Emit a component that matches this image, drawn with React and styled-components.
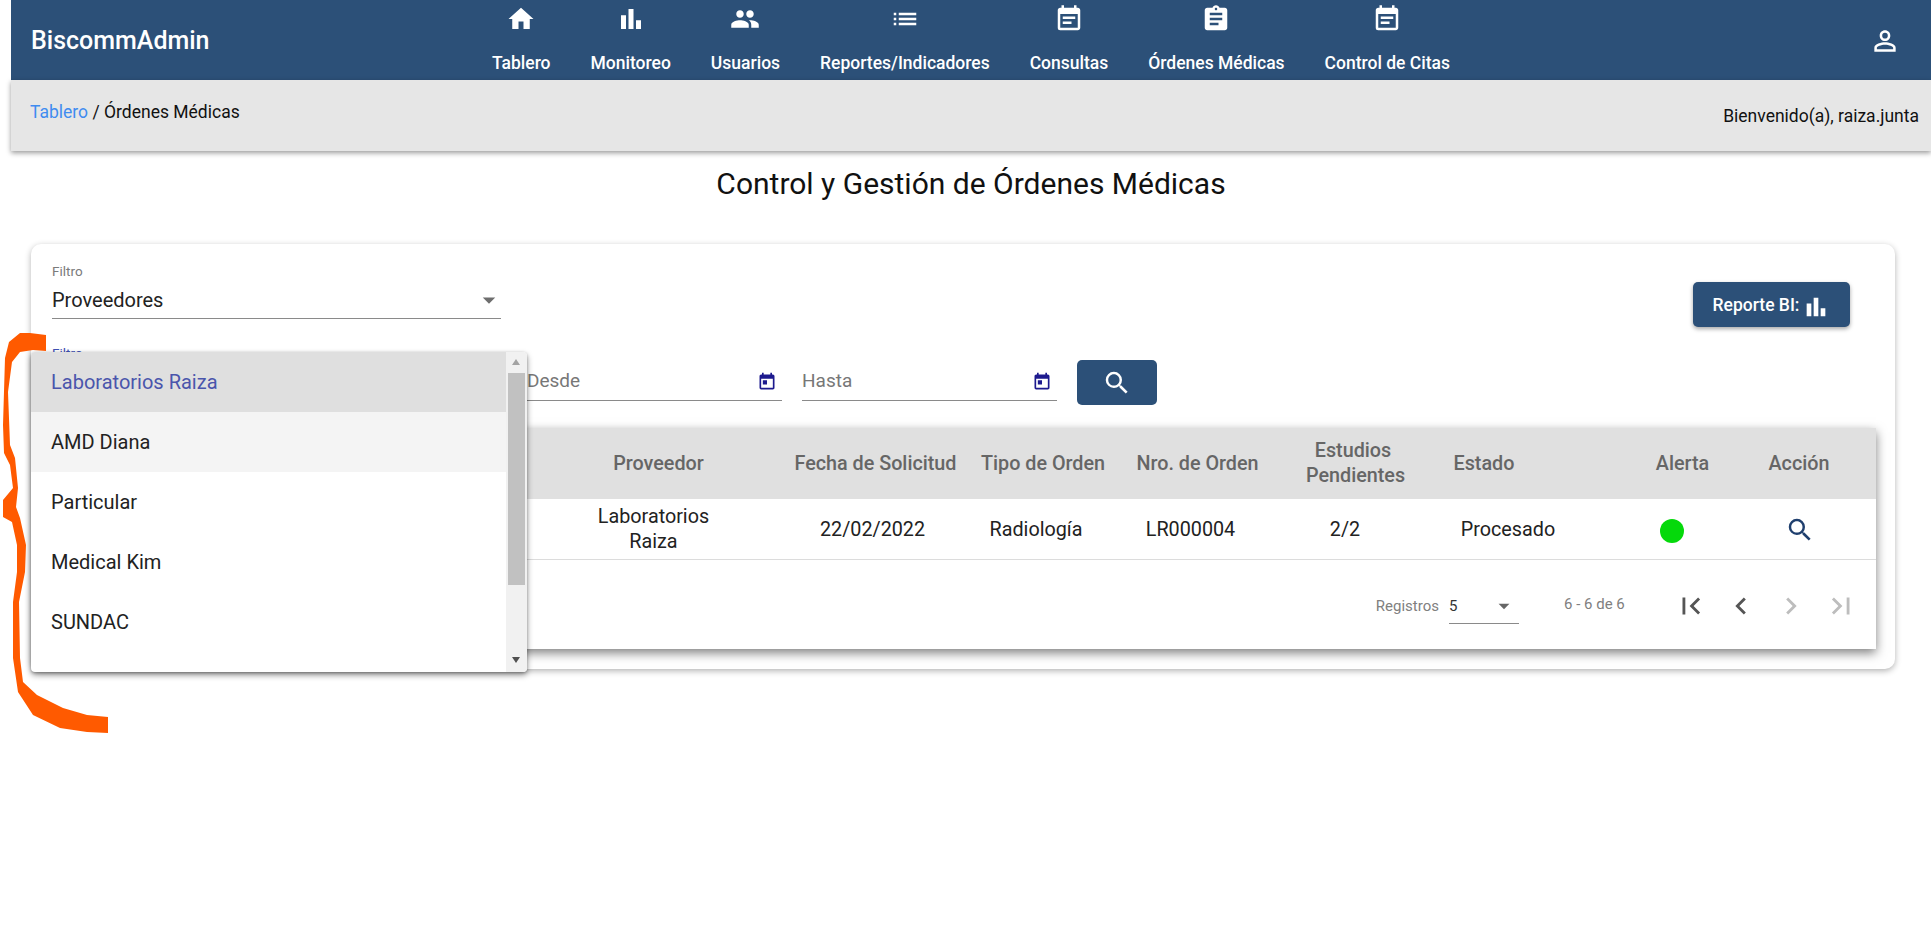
import React from "react";
import styled, { createGlobalStyle } from "styled-components";
import {
  MdHome, MdBarChart, MdPeople, MdList, MdEventNote, MdAssignment, MdPersonOutline,
  MdToday, MdSearch, MdFirstPage, MdLastPage, MdChevronLeft, MdChevronRight, MdArrowDropDown,
} from "react-icons/md";

const Global = createGlobalStyle`
  html, body { margin: 0; padding: 0; background: #fff; }
  body { font-family: Roboto, "Liberation Sans", sans-serif; }
  * { box-sizing: border-box; }
`;

const Root = styled.div`
  position: relative;
  width: 1931px;
  height: 936px;
  padding-left: 11px;
  overflow: hidden;
`;

const Header = styled.header`
  display: grid;
  grid-template-columns: 1fr auto 1fr;
  height: 80px;
  background: #2c5078;
  color: #fff;
  padding: 0 20px;
`;

const Brand = styled.div`
  font-size: 25px;
  font-weight: 500;
  line-height: 28px;
  padding-top: 27px;
`;

const Nav = styled.nav`
  display: flex;
  gap: 40px;
`;

const NavItem = styled.div`
  display: flex;
  flex-direction: column;
  align-items: center;
  padding-top: 4px;
  font-size: 17.5px;
  font-weight: 500;
  line-height: 20px;
  gap: 19px;
  white-space: nowrap;
  svg { display: block; }
`;

const UserSlot = styled.div`
  display: flex;
  justify-content: flex-end;
  padding: 25px 10px 0 0;
`;

const SubBar = styled.div`
  display: flex;
  justify-content: space-between;
  height: 71px;
  background: #e6e6e6;
  box-shadow: 0 2px 5px rgba(0, 0, 0, 0.4);
  padding: 22px 12px 0 19px;
  font-size: 17.5px;
  line-height: 20px;
  color: #111;
`;

const Crumb = styled.div`
  a { color: #3f8cf0; text-decoration: none; }
`;

const Welcome = styled.div`
  padding-top: 4px;
`;

const Title = styled.h1`
  margin: 0;
  padding-top: 15px;
  height: 93px;
  text-align: center;
  font-size: 30px;
  font-weight: 400;
  line-height: 36px;
  color: #111;
`;

const Card = styled.section`
  width: 1864px;
  height: 425px;
  margin-left: 20px;
  background: #fff;
  border-radius: 10px;
  box-shadow: 0 2px 6px rgba(0, 0, 0, 0.3);
  padding: 20px 20px 0 20px;
`;

const TopRow = styled.div`
  display: flex;
  justify-content: space-between;
  align-items: flex-start;
  height: 88px;
`;

const Field = styled.div`
  flex: none;
  width: ${(p) => p.$w}px;
  height: ${(p) => p.$h}px;
  margin-top: ${(p) => p.$top || 0}px;
  margin-left: 1px;
  border-bottom: 1px solid #8a8a8a;
`;

const SmallLabel = styled.div`
  margin-top: -1px;
  font-size: 13.5px;
  line-height: 16px;
  color: ${(p) => (p.$focus ? "#3f51b5" : "#7b7b7b")};
`;

const SelectValue = styled.div`
  display: flex;
  justify-content: space-between;
  align-items: center;
  margin-top: 6px;
  font-size: 20px;
  line-height: 28px;
  color: #222;
  svg { color: #6e6e6e; margin-right: -3px; }
`;

const ReportButton = styled.button`
  display: flex;
  align-items: center;
  justify-content: center;
  gap: 3px;
  margin: 18px 25px 0 0;
  width: 157px;
  height: 45px;
  border: 0;
  border-radius: 5px;
  background: #2c5078;
  color: #fff;
  font: 500 17.5px Roboto, sans-serif;
  box-shadow: 0 2px 4px rgba(0, 0, 0, 0.35);
  svg { margin-top: 5px; }
`;

const FilterRow = styled.div`
  display: flex;
  align-items: flex-start;
  gap: 20px;
  height: 76px;
`;

const DateField = styled.div`
  flex: none;
  display: flex;
  justify-content: space-between;
  align-items: center;
  width: 255px;
  height: 49px;
  padding: 8px 5px 0 0;
  border-bottom: 1px solid #8a8a8a;
  font-size: 19px;
  color: #777;
  svg { color: #1d1a8e; margin-top: 4px; }
`;

const SearchButton = styled.button`
  display: flex;
  align-items: center;
  justify-content: center;
  width: 80px;
  height: 45px;
  margin-top: 8px;
  border: 0;
  border-radius: 5px;
  background: #2c5078;
  color: #fff;
`;

const TableCard = styled.div`
  width: 1825px;
  height: 221px;
  background: #fff;
  box-shadow: 0 4px 10px rgba(0, 0, 0, 0.5);
`;

const columns = "494px 225px 211px 124px 185px 110px 200px 145px 108px 23px";

const HeadRow = styled.div`
  display: grid;
  grid-template-columns: ${columns};
  height: 71px;
  align-items: center;
  background: #e0e0e0;
  color: #666;
  font-size: 19.75px;
  font-weight: 500;
  line-height: 25px;
  text-align: center;
`;

const BodyRow = styled.div`
  display: grid;
  grid-template-columns: ${columns};
  height: 61px;
  align-items: center;
  border-bottom: 1px solid #dcdcdc;
  color: #222;
  font-size: 19.75px;
  line-height: 25px;
  text-align: center;
`;

const Cell = styled.div`
  white-space: ${(p) => (p.$wrap ? "normal" : "nowrap")};
  margin-top: ${(p) => (p.$wrap ? -2 : 0)}px;
  padding-left: ${(p) => Math.max(0, (p.$shift || 0) * 2)}px;
  padding-right: ${(p) => Math.max(0, -(p.$shift || 0) * 2)}px;
`;

const Dot = styled.span`
  display: inline-block;
  width: 24px;
  height: 24px;
  margin-top: 4px;
  border-radius: 50%;
  background: #05d90b;
  vertical-align: middle;
`;

const ActionIcon = styled(MdSearch)`
  color: #1f3f6e;
  vertical-align: middle;
  margin-top: 2px;
`;

const Pager = styled.div`
  display: flex;
  justify-content: flex-end;
  align-items: flex-start;
  padding: 31px 18px 0 0;
  color: #808080;
`;

const PagerLabel = styled.span`
  font-size: 15px;
  line-height: 30px;
  margin-right: 10px;
`;

const PagerSelect = styled.div`
  display: flex;
  justify-content: space-between;
  align-items: center;
  width: 70px;
  height: 33px;
  margin-right: 45px;
  border-bottom: 1px solid #8a8a8a;
  font-size: 15px;
  color: #333;
  padding-bottom: 3px;
  svg { color: #666; margin-right: 2px; }
`;

const PagerRange = styled.span`
  width: 85px;
  font-size: 15px;
  line-height: 26px;
  margin-right: 25px;
`;

const PagerIcons = styled.div`
  display: flex;
  gap: 16px;
  margin-top: -2px;
  svg { display: block; color: #555; }
  svg.off { color: #bdbdbd; }
`;

const Menu = styled.div`
  position: absolute;
  left: 31px;
  top: 352px;
  width: 496px;
  height: 320px;
  display: flex;
  background: #fff;
  border-radius: 4px;
  overflow: hidden;
  box-shadow: 0 3px 6px rgba(0, 0, 0, 0.4), 0 1px 3px rgba(0, 0, 0, 0.25);
`;

const MenuList = styled.div`
  flex: 1;
`;

const MenuItem = styled.div`
  height: 60px;
  line-height: 60px;
  padding-left: 20px;
  font-size: 20px;
  color: ${(p) => (p.$selected ? "#4a55ac" : "#222")};
  background: ${(p) => (p.$selected ? "#dfdfdf" : p.$hover ? "#f4f4f4" : "#fff")};
`;

const ScrollTrack = styled.div`
  position: relative;
  width: 21px;
  background: #f1f1f1;
`;

const ScrollThumb = styled.div`
  position: absolute;
  left: 2px;
  right: 2px;
  top: 21px;
  height: 212px;
  background: #c1c1c1;
`;

const ScrollArrow = styled.div`
  position: absolute;
  left: 6px;
  width: 0;
  height: 0;
  border-left: 4.5px solid transparent;
  border-right: 4.5px solid transparent;
  ${(p) =>
    p.$up
      ? "top: 7px; border-bottom: 6px solid #a3a3a3;"
      : "bottom: 9px; border-top: 6px solid #505050;"}
`;

const Scribble = styled.svg`
  position: absolute;
  left: 0;
  top: 0;
  pointer-events: none;
`;

const navItems = [
  [MdHome, "Tablero"],
  [MdBarChart, "Monitoreo"],
  [MdPeople, "Usuarios"],
  [MdList, "Reportes/Indicadores"],
  [MdEventNote, "Consultas"],
  [MdAssignment, "Órdenes Médicas"],
  [MdEventNote, "Control de Citas"],
];

const headers = [
  ["", 0],
  ["Proveedor", 1],
  ["Fecha de Solicitud", 0],
  ["Tipo de Orden", 0],
  ["Nro. de Orden", 0],
  ["Estudios Pendientes", 8],
  ["Estado", -16],
  ["Alerta", 10],
  ["Acción", 0],
];

const providers = ["Laboratorios Raiza", "AMD Diana", "Particular", "Medical Kim", "SUNDAC"];

export default function App() {
  return (
    <Root>
      <Global />
      <Header>
        <Brand>BiscommAdmin</Brand>
        <Nav>
          {navItems.map(([Icon, label]) => (
            <NavItem key={label}>
              <Icon size={30} />
              {label}
            </NavItem>
          ))}
        </Nav>
        <UserSlot>
          <MdPersonOutline size={32} color="#fff" />
        </UserSlot>
      </Header>
      <SubBar>
        <Crumb>
          <a href="#t">Tablero</a> / Órdenes Médicas
        </Crumb>
        <Welcome>Bienvenido(a), raiza.junta</Welcome>
      </SubBar>
      <Title>Control y Gestión de Órdenes Médicas</Title>
      <Card>
        <TopRow>
          <Field $w={449} $h={55}>
            <SmallLabel>Filtro</SmallLabel>
            <SelectValue>
              Proveedores
              <MdArrowDropDown size={30} />
            </SelectValue>
          </Field>
          <ReportButton>
            Reporte BI: <MdBarChart size={28} />
          </ReportButton>
        </TopRow>
        <FilterRow>
          <Field $w={455} $h={55} $top={-6}>
            <SmallLabel $focus>Filtro</SmallLabel>
          </Field>
          <DateField>
            Desde
            <MdToday size={20} />
          </DateField>
          <DateField>
            Hasta
            <MdToday size={20} />
          </DateField>
          <SearchButton>
            <MdSearch size={30} />
          </SearchButton>
        </FilterRow>
        <TableCard>
          <HeadRow>
            {headers.map(([h, s], i) => (
              <Cell key={i} $shift={s} $wrap={h.startsWith("Estudios")}>
                {h}
              </Cell>
            ))}
          </HeadRow>
          <BodyRow>
            <Cell />
            <Cell $shift={-4}>Laboratorios<br />Raiza</Cell>
            <Cell $shift={-3}>22/02/2022</Cell>
            <Cell $shift={-7}>Radiología</Cell>
            <Cell $shift={-7}>LR000004</Cell>
            <Cell>2/2</Cell>
            <Cell $shift={8}>Procesado</Cell>
            <Cell $shift={-1}><Dot /></Cell>
            <Cell $shift={1}><ActionIcon size={30} /></Cell>
          </BodyRow>
          <Pager>
            <PagerLabel>Registros</PagerLabel>
            <PagerSelect>
              5
              <MdArrowDropDown size={26} />
            </PagerSelect>
            <PagerRange>6 - 6 de 6</PagerRange>
            <PagerIcons>
              <MdFirstPage size={34} />
              <MdChevronLeft size={34} />
              <MdChevronRight size={34} className="off" />
              <MdLastPage size={34} className="off" />
            </PagerIcons>
          </Pager>
        </TableCard>
      </Card>
      <Menu>
        <MenuList>
          {providers.map((p, i) => (
            <MenuItem key={p} $selected={i === 0} $hover={i === 1}>{p}</MenuItem>
          ))}
        </MenuList>
        <ScrollTrack>
          <ScrollArrow $up />
          <ScrollThumb />
          <ScrollArrow />
        </ScrollTrack>
      </Menu>
      <Scribble width="130" height="936" viewBox="0 0 130 936">
        <path
          fill="#ff5a00"
          d="M46 335 L46 351 L33 350 L20 352 L12 362 L8 392 L10 445 L15 458 L18 488 L16 507 L20 518 L26 545 L25 572 L19 602 L20 658 L23 682 L37 695 L63 708 L87 715 L108 717 L108 733 L87 732 L60 728 L33 715 L18 692 L13 658 L13 602 L17 572 L17 545 L12 522 L3 517 L3 500 L13 488 L10 465 L4 453 L3 425 L5 358 L9 342 L20 333 L30 333 Z"
        />
      </Scribble>
    </Root>
  );
}
